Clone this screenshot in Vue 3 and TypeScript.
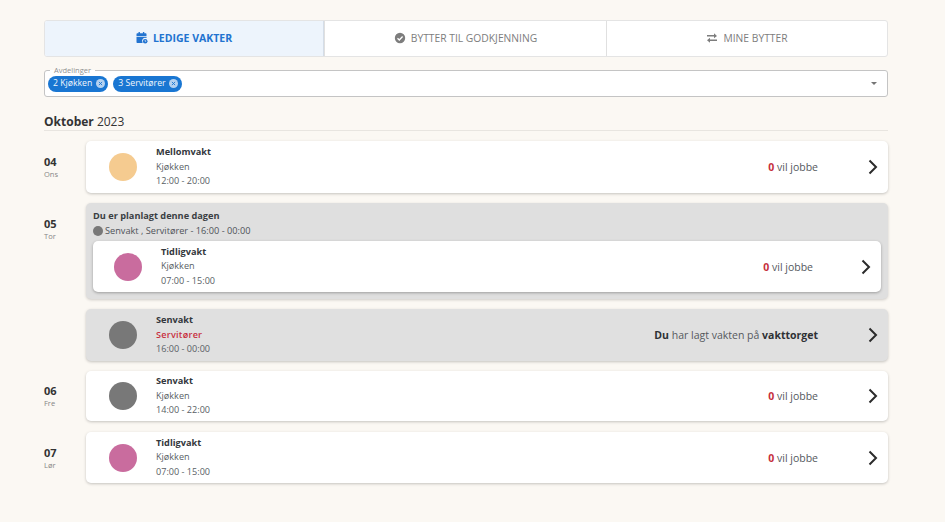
<script setup lang="ts">
interface Shift {
  name: string
  dept: string
  time: string
  color: string
}

const tabs = [
  { label: 'LEDIGE VAKTER', icon: 'cal', active: true, width: '279px' },
  { label: 'BYTTER TIL GODKJENNING', icon: 'check', active: false, width: '282px' },
  { label: 'MINE BYTTER', icon: 'swap', active: false, width: '281px' },
]
const PEACH = '#f5cb90'
const PINK = '#c96c9e'
const GREY = '#787878'
const mellom: Shift = { name: 'Mellomvakt', dept: 'Kjøkken', time: '12:00 - 20:00', color: PEACH }
const tidlig: Shift = { name: 'Tidligvakt', dept: 'Kjøkken', time: '07:00 - 15:00', color: PINK }
const senMine: Shift = { name: 'Senvakt', dept: 'Servitører', time: '16:00 - 00:00', color: GREY }
const sen: Shift = { name: 'Senvakt', dept: 'Kjøkken', time: '14:00 - 22:00', color: GREY }
</script>

<template>
  <main class="page">
    <nav class="tabs">
      <div v-for="t in tabs" :key="t.label" class="tab" :class="{ active: t.active }" :style="{ width: t.width }">
        <svg v-if="t.icon === 'cal'" class="ti" viewBox="0 0 12 12">
          <path fill="currentColor" d="M2.500 0h1.400v1.300h3V0h1.400v1.300h1.200c.6 0 1 .4 1 1V4H.5V2.300c0-.6.4-1 1-1h1zM.5 4.800h10v1.300a3.200 3.200 0 0 0-3.800 4.900H1.500c-.6 0-1-.4-1-1z" />
          <circle cx="9.200" cy="9.200" r="2.300" fill="currentColor" />
          <path d="M9.200 8v1.300h1" stroke="#edf4fc" stroke-width=".7" fill="none" />
        </svg>
        <svg v-else-if="t.icon === 'check'" class="ti" viewBox="0 0 12 12">
          <circle cx="6" cy="6" r="5.200" fill="currentColor" />
          <path d="M3.500 6.200 5.300 8l3.300-3.500" stroke="#fff" stroke-width="1.300" fill="none" />
        </svg>
        <svg v-else class="ti" viewBox="0 0 12 12">
          <path fill="currentColor" d="M1 3h7V1.200L11 3.900 8 6.200V4.600H1zM11 7.400H4V5.800L1 8.300l3 2.500V9h7z" />
        </svg>
        <span>{{ t.label }}</span>
      </div>
    </nav>

    <section class="select">
      <span class="legend">Avdelinger</span>
      <span class="chip">2 Kjøkken
        <svg class="x" viewBox="0 0 10 10"><circle cx="5" cy="5" r="5" fill="#b5d2f0" /><path d="M3.200 3.200l3.600 3.600M6.800 3.200 3.200 6.800" stroke="#1976d2" stroke-width="1" /></svg>
      </span>
      <span class="chip">3 Servitører
        <svg class="x" viewBox="0 0 10 10"><circle cx="5" cy="5" r="5" fill="#b5d2f0" /><path d="M3.200 3.200l3.600 3.600M6.800 3.200 3.200 6.800" stroke="#1976d2" stroke-width="1" /></svg>
      </span>
      <span class="caret"></span>
    </section>

    <h2 class="month"><b>Oktober</b> 2023</h2>

    <div class="rows">
      <div class="row">
        <div class="date"><b>04</b><small>Ons</small></div>
        <div class="card">
          <span class="dot" :style="{ background: mellom.color }"></span>
          <div class="info"><b>{{ mellom.name }}</b><span>{{ mellom.dept }}</span><span>{{ mellom.time }}</span></div>
          <div class="want"><b class="red">0</b> vil jobbe</div>
          <svg class="chev" viewBox="0 0 10 16"><path d="M1.500 1.500 8 8l-6.500 6.500" /></svg>
        </div>
      </div>

      <div class="row">
        <div class="date d2"><b>05</b><small>Tor</small></div>
        <div class="stack">
          <div class="group">
            <div class="gt">Du er planlagt denne dagen</div>
            <div class="gs"><i></i>Senvakt , Servitører - 16:00 - 00:00</div>
            <div class="card inner">
              <span class="dot" :style="{ background: tidlig.color }"></span>
              <div class="info"><b>{{ tidlig.name }}</b><span>{{ tidlig.dept }}</span><span>{{ tidlig.time }}</span></div>
              <div class="want"><b class="red">0</b> vil jobbe</div>
              <svg class="chev" viewBox="0 0 10 16"><path d="M1.500 1.500 8 8l-6.500 6.500" /></svg>
            </div>
          </div>
          <div class="card grey">
            <span class="dot" :style="{ background: senMine.color }"></span>
            <div class="info"><b>{{ senMine.name }}</b><span class="redt">{{ senMine.dept }}</span><span>{{ senMine.time }}</span></div>
            <div class="want"><b>Du</b> har lagt vakten på <b>vakttorget</b></div>
            <svg class="chev" viewBox="0 0 10 16"><path d="M1.500 1.500 8 8l-6.500 6.500" /></svg>
          </div>
        </div>
      </div>

      <div class="row">
        <div class="date"><b>06</b><small>Fre</small></div>
        <div class="card h50">
          <span class="dot" :style="{ background: sen.color }"></span>
          <div class="info"><b>{{ sen.name }}</b><span>{{ sen.dept }}</span><span>{{ sen.time }}</span></div>
          <div class="want"><b class="red">0</b> vil jobbe</div>
          <svg class="chev" viewBox="0 0 10 16"><path d="M1.500 1.500 8 8l-6.500 6.500" /></svg>
        </div>
      </div>

      <div class="row last">
        <div class="date"><b>07</b><small>Lør</small></div>
        <div class="card h51">
          <span class="dot" :style="{ background: tidlig.color }"></span>
          <div class="info"><b>{{ tidlig.name }}</b><span>{{ tidlig.dept }}</span><span>{{ tidlig.time }}</span></div>
          <div class="want"><b class="red">0</b> vil jobbe</div>
          <svg class="chev" viewBox="0 0 10 16"><path d="M1.500 1.500 8 8l-6.500 6.500" /></svg>
        </div>
      </div>
    </div>
  </main>
</template>

<style>
html, body { margin: 0; background: #fbf8f3; }
</style>

<style scoped>
.page {
  box-sizing: border-box;
  width: 945px;
  height: 522px;
  padding: 20px 57px 0 44px;
  overflow: hidden;
  font-family: "Open Sans", sans-serif;
  color: #3c4043;
  background: #fbf8f3;
}
.tabs {
  display: flex;
  height: 37px;
  box-sizing: border-box;
  border: 1px solid #e4e4e4;
  border-radius: 3px;
  background: #fff;
  overflow: hidden;
}
.tab {
  box-sizing: border-box;
  flex: 1 1 auto;
  display: flex;
  align-items: center;
  justify-content: center;
  gap: 5px;
  padding-bottom: 1px;
  font-size: 10.300px;
  font-weight: 400;
  color: #7d7d7d;
  border-left: 1px solid #e0e0e0;
}
.tab:first-child { border-left: 0; }
.tab.active {
  background: #edf4fc;
  color: #2273d0;
  font-size: 10.500px;
  font-weight: 700;
  border-right: 1px solid #d4dde8;
}
.ti { width: 12px; height: 12px; flex: none; }
.select {
  position: relative;
  box-sizing: border-box;
  display: flex;
  align-items: center;
  gap: 5px;
  height: 27px;
  margin-top: 13px;
  padding: 0 3px;
  border: 1px solid #c4c4c4;
  border-radius: 3px;
  background: #fff;
}
.legend {
  position: absolute;
  left: 5px;
  top: -6px;
  padding: 0 4px;
  font-size: 7.500px;
  line-height: 10px;
  color: #8f8f8f;
  background: linear-gradient(#fbf8f3 50%, #fff 50%);
}
.chip {
  display: inline-flex;
  align-items: center;
  gap: 3.500px;
  height: 16px;
  padding: 0 3.500px 1px 5px;
  box-sizing: border-box;
  border-radius: 8px;
  background: #1976d2;
  color: #f2f7fc;
  font-size: 8.700px;
}
.x { width: 9px; height: 9px; position: relative; top: .5px; }
.caret {
  position: absolute;
  right: 10px;
  top: 11px;
  border-style: solid;
  border-width: 3px 3.500px 0;
  border-color: #757575 transparent transparent;
}
.month {
  margin: 17px 0 0;
  height: 16px;
  box-sizing: content-box;
  border-bottom: 1.500px solid #e8e5e0;
  font-size: 12px;
  line-height: 15px;
  font-weight: 400;
  color: #333;
}
.month b { font-weight: 700; }
.rows { display: flex; flex-direction: column; gap: 10px; margin-top: 10px; }
.row { display: flex; }
.row.last { margin-top: 1px; }
.date {
  width: 42px;
  flex: none;
  display: flex;
  flex-direction: column;
  justify-content: center;
  color: #333;
}
.date.d2 { justify-content: flex-start; padding-top: 14px; }
.date b { font-size: 11px; line-height: 14px; }
.date small { font-size: 7.500px; line-height: 10px; color: #868686; }
.stack { flex: 1; display: flex; flex-direction: column; gap: 10px; }
.card {
  flex: 1;
  box-sizing: border-box;
  height: 52px;
  display: flex;
  align-items: center;
  padding: 0 10.500px 0 23px;
  background: #fff;
  border-radius: 5px;
  box-shadow: 0 1px 3px rgba(0, 0, 0, .22);
}
.h50 { height: 50px; }
.h51 { height: 51px; }
.grey { flex: none; background: #e0e0e0; }
.dot { width: 28px; height: 28px; border-radius: 50%; flex: none; }
.info {
  display: flex;
  flex-direction: column;
  margin-left: 19px;
  font-size: 9.100px;
  line-height: 14.500px;
  color: #5a5f66;
}
.info b { color: #33373c; font-weight: 700; font-size: 9.200px; }
.redt { color: #c8303f; font-weight: 600; letter-spacing: .25px; }
.want {
  margin-left: auto;
  margin-right: 49.500px;
  font-size: 10.500px;
  color: #55595e;
}
.want b { color: #2e3135; }
.want b.red { color: #c62f3d; }
.chev { width: 10px; height: 16px; flex: none; }
.chev path { fill: none; stroke: #2b2b2b; stroke-width: 2; }
.group {
  box-sizing: border-box;
  height: 96px;
  padding: 7px 7px 0;
  background: #dfdfdf;
  border-radius: 5px;
  box-shadow: 0 1px 3px rgba(0, 0, 0, .18);
}
.gt { font-size: 9.200px; font-weight: 700; line-height: 12px; color: #3a3e43; }
.gs {
  display: flex;
  align-items: center;
  gap: 2px;
  margin-top: 3px;
  font-size: 9.200px;
  line-height: 12px;
  color: #4f5359;
}
.gs i { width: 10px; height: 10px; border-radius: 50%; background: #787878; }
.inner { height: 51px; margin-top: 4px; flex: none; padding: 0 10px 0 21px; box-shadow: 0 1px 3px rgba(0, 0, 0, .3); }
.inner .want { margin-right: 48px; }
</style>
